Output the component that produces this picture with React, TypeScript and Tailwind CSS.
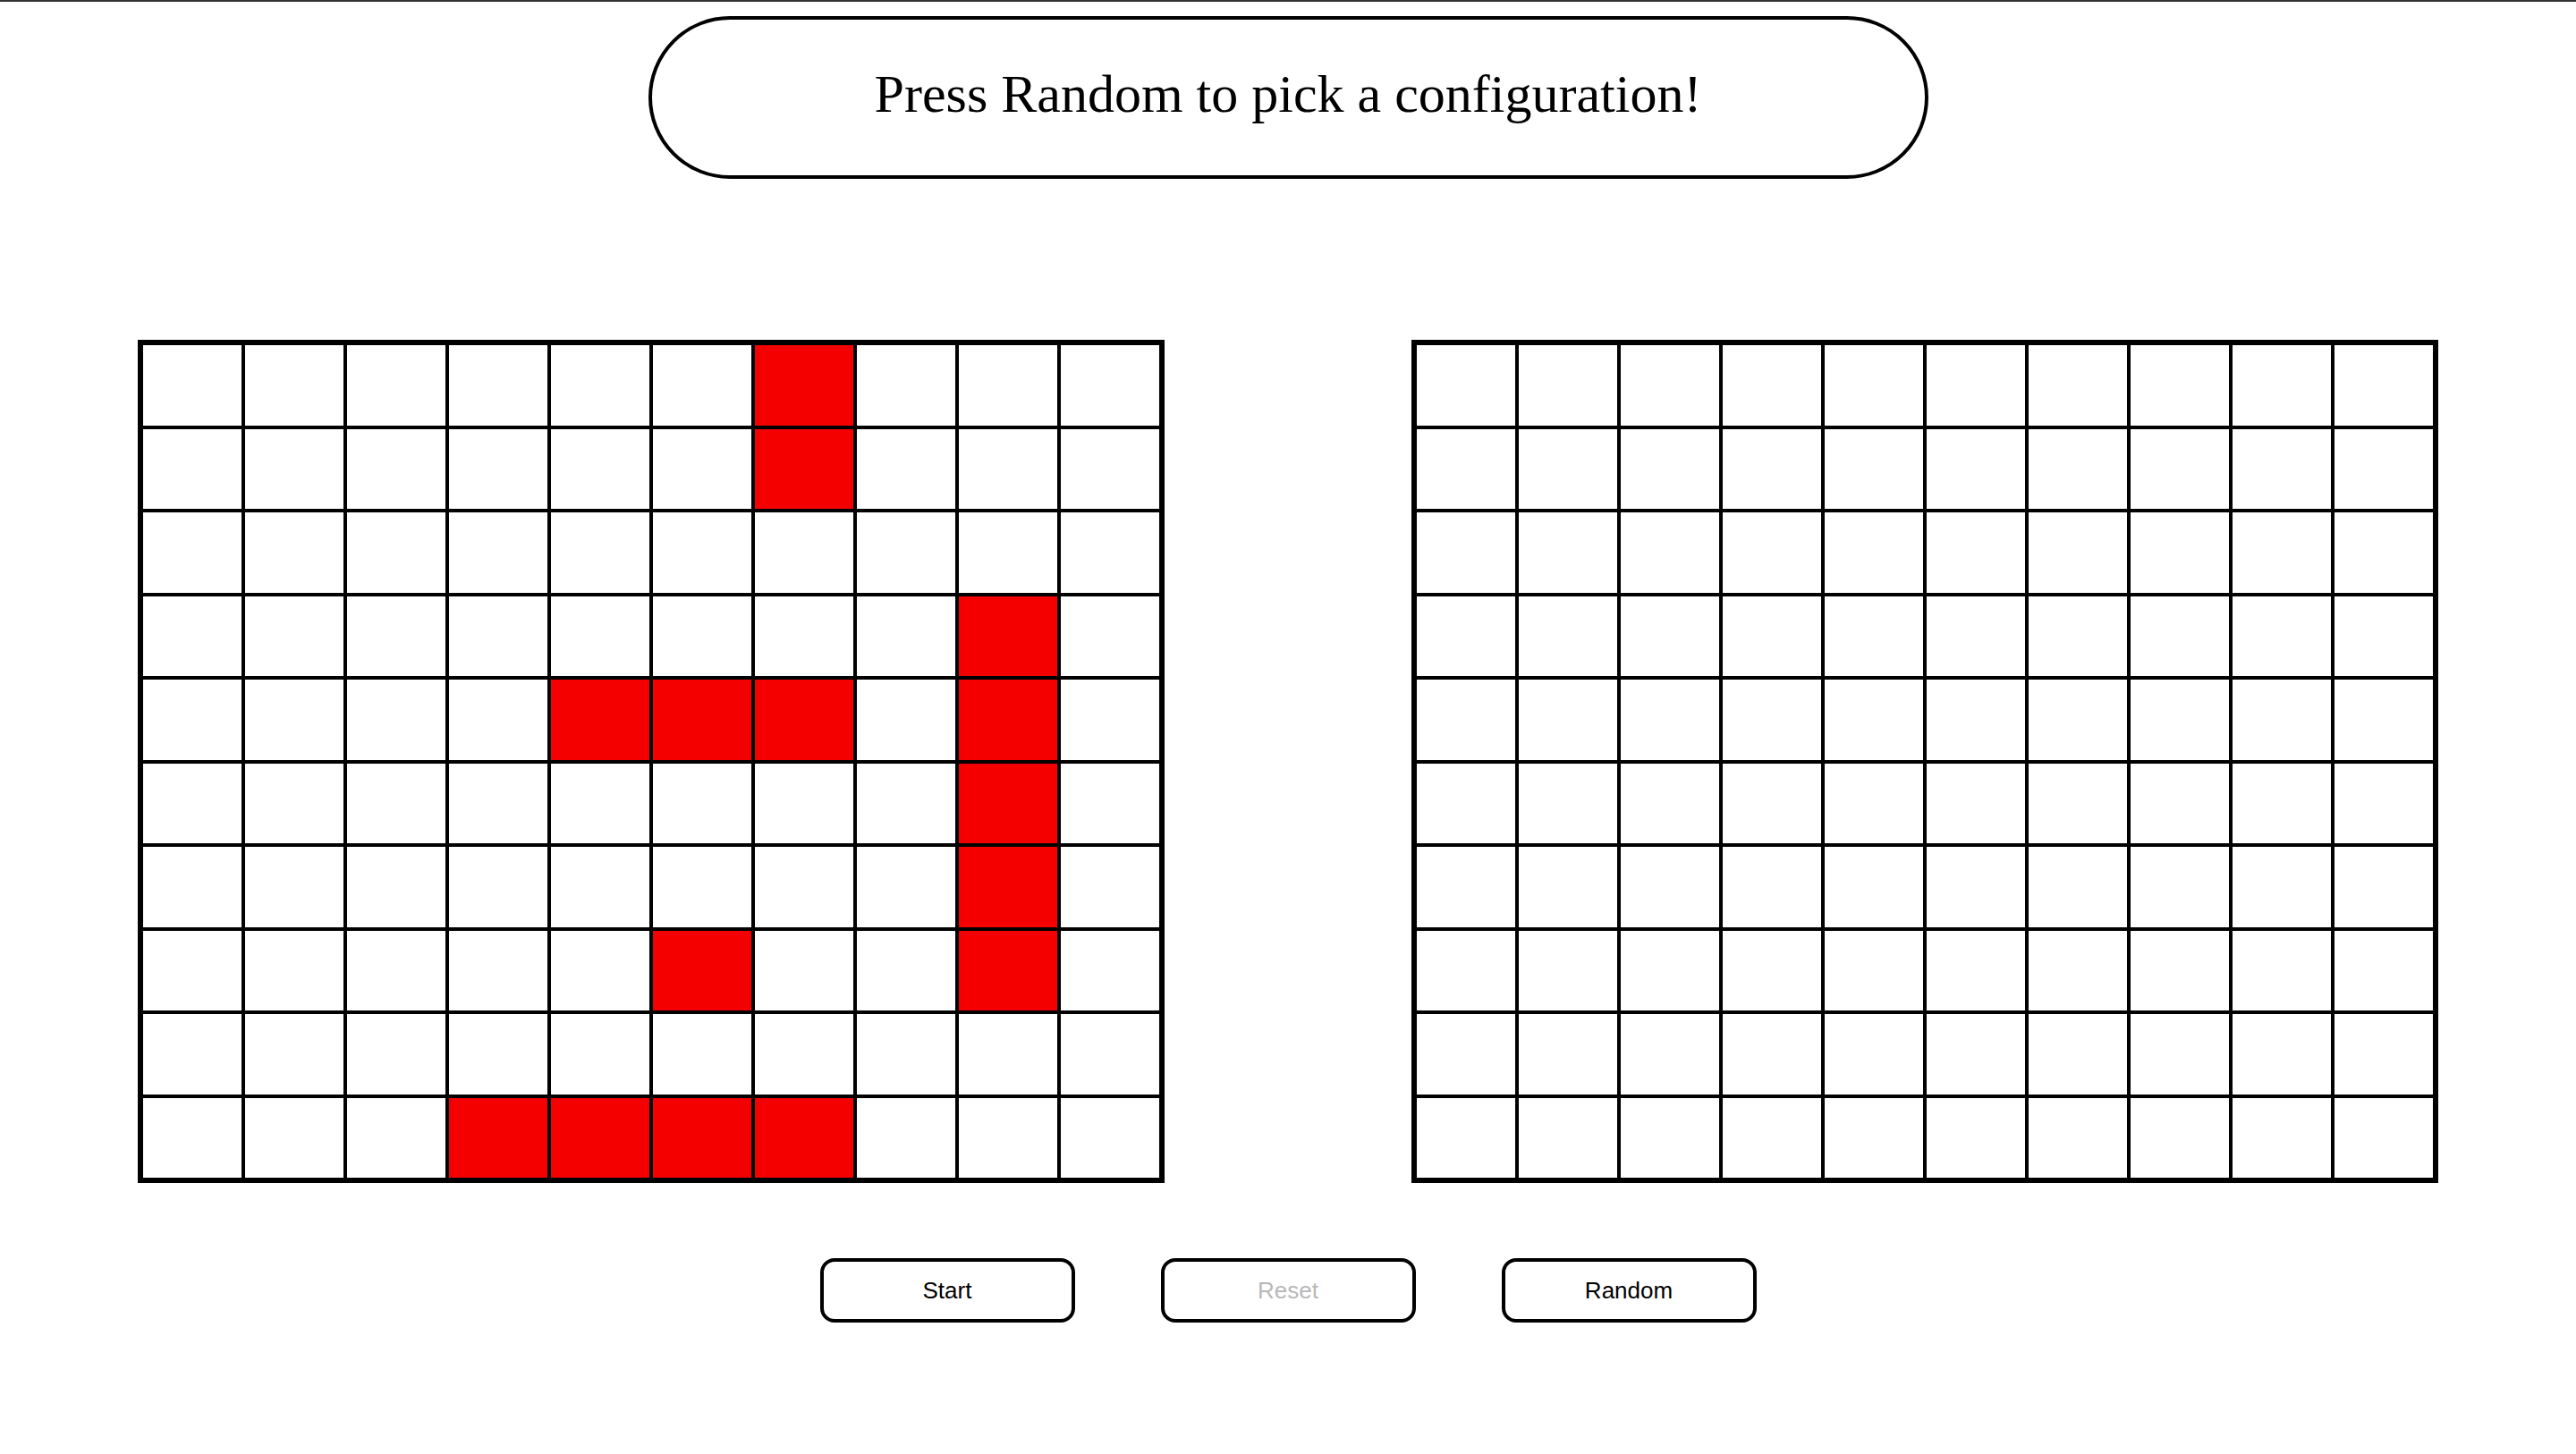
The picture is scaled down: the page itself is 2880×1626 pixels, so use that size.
import React from 'react';

const ROWS = 10;
const COLS = 10;

// live cells of the picked configuration, as "row-col"
const LIVE = new Set([
  '0-6', '1-6',
  '3-8',
  '4-4', '4-5', '4-6', '4-8',
  '5-8', '6-8',
  '7-5', '7-8',
  '9-3', '9-4', '9-5', '9-6',
]);

const Board: React.FC<{ live?: Set<string> }> = ({ live }) => {
  const cells = [];
  for (let r = 0; r < ROWS; r++) {
    for (let c = 0; c < COLS; c++) {
      const on = live?.has(`${r}-${c}`);
      cells.push(
        <div
          key={`${r}-${c}`}
          className={`border-2 border-black ${on ? 'bg-[#f40000]' : 'bg-white'}`}
        />
      );
    }
  }
  return (
    <div className="w-[1148px] h-[943px] border-4 border-black grid grid-cols-10 grid-rows-10">
      {cells}
    </div>
  );
};

const Button: React.FC<{ label: string; disabled?: boolean }> = ({ label, disabled }) => (
  <button
    disabled={disabled}
    className={`w-[285px] h-[72px] border-4 border-black rounded-[16px] bg-white text-[26px] ${disabled ? 'text-[#b8b8b8]' : 'text-black'}`}
    style={{ fontFamily: "'Liberation Sans', Arial, sans-serif" }}
  >
    {label}
  </button>
);

export default function App() {
  return (
    <div className="min-h-screen bg-white flex flex-col items-center">
      <div className="w-full h-[2px] bg-[#333333]" />

      {/* Status pill */}
      <div className="mt-[16px] w-[1431px] h-[182px] border-4 border-black rounded-full flex items-center justify-center pb-[8px]">
        <h1
          className="text-[60px] text-black leading-none"
          style={{ fontFamily: "'Liberation Serif', 'Times New Roman', serif" }}
        >
          Press Random to pick a configuration!
        </h1>
      </div>

      {/* Boards */}
      <div className="mt-[180px] flex gap-[276px]">
        <Board live={LIVE} />
        <Board />
      </div>

      {/* Controls */}
      <div className="mt-[84px] flex gap-[96px]">
        <Button label="Start" />
        <Button label="Reset" disabled />
        <Button label="Random" />
      </div>
    </div>
  );
}
